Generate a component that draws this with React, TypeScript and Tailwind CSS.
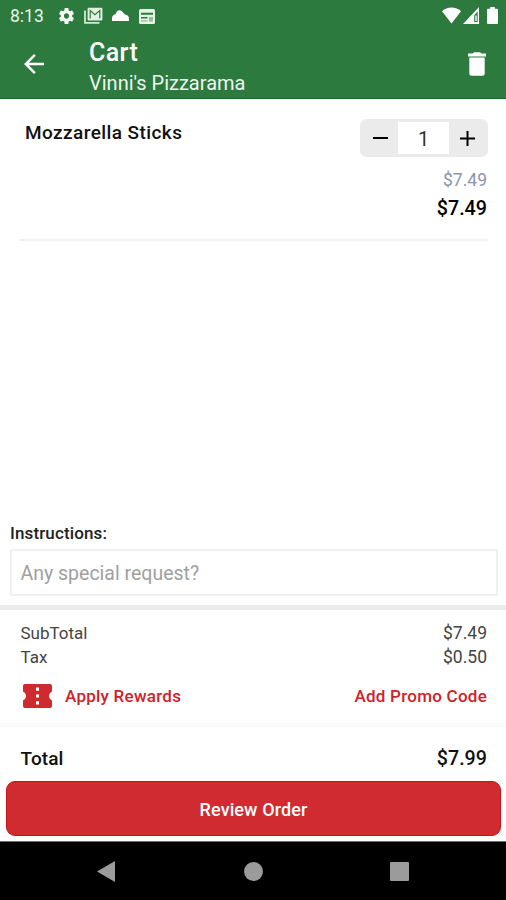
import React from "react";

type IconProps = { d: string; className: string; viewBox?: string };

function Icon({ d, className, viewBox = "0 0 24 24" }: IconProps) {
  return (
    <svg viewBox={viewBox} className={className} fill="currentColor" preserveAspectRatio="none" aria-hidden="true">
      <path fillRule="evenodd" d={d} />
    </svg>
  );
}

const GEAR =
  "M19.14 12.94c.04-.3.06-.61.06-.94 0-.32-.02-.64-.07-.94l2.03-1.58c.18-.14.23-.41.12-.61l-1.92-3.32c-.12-.22-.37-.29-.59-.22l-2.39.96c-.5-.38-1.03-.7-1.62-.94l-.36-2.54c-.04-.24-.24-.41-.48-.41h-3.84c-.24 0-.43.17-.47.41l-.36 2.54c-.59.24-1.13.57-1.62.94l-2.39-.96c-.22-.08-.47 0-.59.22L2.74 8.87c-.12.21-.08.47.12.61l2.03 1.58c-.05.3-.09.63-.09.94s.02.64.07.94l-2.03 1.58c-.18.14-.23.41-.12.61l1.92 3.32c.12.22.37.29.59.22l2.39-.96c.5.38 1.03.7 1.62.94l.36 2.54c.05.24.24.41.48.41h3.84c.24 0 .44-.17.47-.41l.36-2.54c.59-.24 1.13-.56 1.62-.94l2.39.96c.22.08.47 0 .59-.22l1.92-3.32c.12-.22.07-.47-.12-.61l-2.01-1.58zM12 15.2c-1.8 0-3.2-1.4-3.2-3.2s1.4-3.2 3.2-3.2 3.2 1.4 3.2 3.2-1.4 3.2-3.2 3.2z";

function StatusBar() {
  return (
    <div className="flex h-8 shrink-0 items-center pl-[10px] pr-[8px] text-white">
      <span className="w-[47px] text-[17.5px] leading-8 text-[#e6f3e8]">8:13</span>
      <Icon className="mb-px mr-[8px] h-[20px] w-[19px] text-[#f1f8f0]" d={GEAR} />
      <svg viewBox="0 0 19 17" className="mb-[2px] mr-[9px] h-[17px] w-[19px]" fill="none" aria-hidden="true">
        <path d="M1 3.5V15.8H15.5" stroke="#d4e8d6" strokeWidth="1.8" />
        <rect x="3.6" y="0.8" width="14.8" height="12.6" rx="1" fill="#e3f0e2" />
        <path d="M6.2 11.5V3.6L11 7.7L15.8 3.6V11.5" stroke="#2c7a3d" strokeWidth="1.2" />
      </svg>
      <Icon className="mb-[2px] mr-[10px] h-[11px] w-[17px]" viewBox="0 0 17 11" d="M13 4.6L9.6 1.1C8-.4 5.4.1 4.5 2.2L3.4 4.3C1.4 4.8 0 6.2 0 8.1V11H17V8.6C17 6.4 15.4 4.9 13 4.6Z" />
      <svg viewBox="0 0 16 15" className="h-[15px] w-[16px]" aria-hidden="true">
        <rect width="16" height="15" rx="1.5" fill="#e6f3e5" />
        <path d="M2 3.8H14V5.8H2ZM2 8H8.5V9.6H2Z" fill="#2c7a3d" />
        <path d="M10 8H14V12.5H10ZM2 11.2H8.5V12.5H2Z" fill="#93bd99" />
      </svg>
      <div className="mb-[2px] ml-auto flex items-center">
        <Icon className="mr-[2px] h-[17px] w-[19px]" viewBox="0 0 19 17" d="M9.5 16.5L0 4.2C5.5-.6 13.5-.6 19 4.2Z" />
        <Icon className="mr-[8px] h-[17px] w-[16px]" viewBox="0 0 16 17" d="M16 0V17H0ZM14.7 4.5L11.2 8.2V15H14.7ZM12.3 8.5H13.7V14H12.3Z" />
        <Icon className="h-[17px] w-[11px]" viewBox="0 0 11 17" d="M3.2 0H7.8V1.8H10A1 1 0 0 1 11 2.8V16A1 1 0 0 1 10 17H1A1 1 0 0 1 0 16V2.8A1 1 0 0 1 1 1.8H3.2Z" />
      </div>
    </div>
  );
}

function Header() {
  return (
    <header className="h-[99px] shrink-0 border-b border-[#1a6b22] bg-[#2c7a3d] text-white">
      <StatusBar />
      <div className="flex h-[66px] items-start pl-[24px] pr-[20px]">
        <button className="mt-[22px] w-[65px]" aria-label="Back">
          <Icon className="h-[20px] w-[20px]" viewBox="4 4 16 16" d="M20 11H7.83l5.59-5.59L12 4l-8 8 8 8 1.41-1.41L7.83 13H20v-2z" />
        </button>
        <div className="mt-[6px] flex-1">
          <h1 className="text-[25px] font-medium leading-[30px] tracking-[0.4px]">Cart</h1>
          <p className="text-[20px] leading-[30px] text-[#edf6ed]">Vinni's Pizzarama</p>
        </div>
        <button className="mt-[20px]" aria-label="Empty cart">
          <Icon className="h-[24px] w-[18px]" viewBox="0 0 18 24" d="M1.3 5.5H16.7V21.3A2.5 2.5 0 0 1 14.2 23.8H3.8A2.5 2.5 0 0 1 1.3 21.3ZM0 1.5H4.6L6 .2H12L13.4 1.5H18V4.5H0Z" />
        </button>
      </div>
    </header>
  );
}

function CartItem() {
  return (
    <section className="ml-[20px] mr-[18px] flex h-[142px] justify-between border-b-2 border-[#efefef] pl-[5px] pt-[20px]">
      <h2 className="text-[19px] font-medium leading-[28px] tracking-[0.42px] text-[#111]">Mozzarella Sticks</h2>
      <div className="flex flex-col items-end pr-[1px]">
        <div className="-mr-px flex h-[38px] w-[128px] items-center rounded-[7px] bg-[#ebebeb]">
          <button className="flex w-[38px] justify-center" aria-label="Decrease">
            <span className="ml-[2px] h-[2px] w-[15px] bg-black" />
          </button>
          <span className="h-[32px] w-[51px] bg-white text-center text-[20px] leading-[35px] text-[#333]">1</span>
          <button className="flex w-[36px] justify-center" aria-label="Increase">
            <Icon className="h-[15px] w-[15px] text-black" viewBox="0 0 15 15" d="M6.5 0H8.5V6.5H15V8.5H8.5V15H6.5V8.5H0V6.5H6.5Z" />
          </button>
        </div>
        <span className="mt-[9px] text-[17.5px] leading-[28px] text-[#8b95ac]">$7.49</span>
        <span className="text-[19.7px] font-medium leading-[30px] text-black">$7.49</span>
      </div>
    </section>
  );
}

function Row({ label, value }: { label: string; value: string }) {
  return (
    <div className="flex justify-between text-[17px] leading-[24px] text-[#444]">
      <span>{label}</span>
      <span className="text-[17.5px]">{value}</span>
    </div>
  );
}

function Summary() {
  return (
    <section className="h-[117px] border-b-4 border-[#fafafa] pl-[20.5px] pr-[19px] pt-[11px]">
      <Row label="SubTotal" value="$7.49" />
      <Row label="Tax" value="$0.50" />
      <div className="mt-[13px] flex items-center text-[17px] font-medium leading-[28px] text-[#cf2229]">
        <Icon
          className="ml-[2.5px] mr-[13px] h-[24px] w-[29px] text-[#cf2a30]"
          viewBox="0 0 29 24"
          d="M2 0H27A2 2 0 0 1 29 2V7.5C25 10 25 14 29 16.5V22A2 2 0 0 1 27 24H2A2 2 0 0 1 0 22V16.5C4 14 4 10 0 7.5V2A2 2 0 0 1 2 0ZM13 3.6V6.8H16V3.6ZM13 10.4V13.6H16V10.4ZM13 17.2V20.4H16V17.2Z"
        />
        <span className="tracking-[0.25px]">Apply Rewards</span>
        <span className="ml-auto tracking-[0.25px]">Add Promo Code</span>
      </div>
    </section>
  );
}

function NavBar() {
  return (
    <nav className="flex h-[59px] shrink-0 items-center border-t border-[#707070] bg-black px-[97px] pt-px text-[#9b9b9b]">
      <Icon className="h-[21px] w-[18px]" viewBox="0 0 18 21" d="M18 0V21L0 10.5Z" />
      <span className="ml-[129px] h-[19px] w-[19px] rounded-full bg-[#9b9b9b]" />
      <span className="ml-auto h-[19px] w-[19px] rounded-[1px] bg-[#9b9b9b]" />
    </nav>
  );
}

export default function App() {
  return (
    <main className="flex h-[900px] w-[506px] flex-col overflow-hidden bg-white font-[Roboto,sans-serif]">
      <Header />
      <CartItem />
      <div className="flex-1" />
      <section className="h-[91px] shrink-0 border-b-[5px] border-[#ebebeb] pl-[10px] pr-[8px]">
        <label className="block text-[17px] font-medium leading-[28px] tracking-[0.13px] text-[#222]">Instructions:</label>
        <div className="mt-[2px] h-[47px] border-2 border-[#f0f0f0] pl-[8.5px] text-[19.5px] leading-[46px] text-[#a0a0a0]">Any special request?</div>
      </section>
      <Summary />
      <div className="flex h-[54px] shrink-0 items-end justify-between pl-[20.5px] pr-[19px] text-[19px] font-medium leading-[28px] tracking-[0.1px] text-[#111]">
        <span className="pb-[8px]">Total</span>
        <span className="pb-[8px] text-[19.7px] tracking-normal">$7.99</span>
      </div>
      <button className="mb-[5px] ml-[6px] mr-[5px] h-[55px] shrink-0 rounded-[9px] border border-[#c5151b] bg-[#d02b30] pt-px text-[18px] font-medium tracking-[0.1px] text-white">Review Order</button>
      <NavBar />
    </main>
  );
}
